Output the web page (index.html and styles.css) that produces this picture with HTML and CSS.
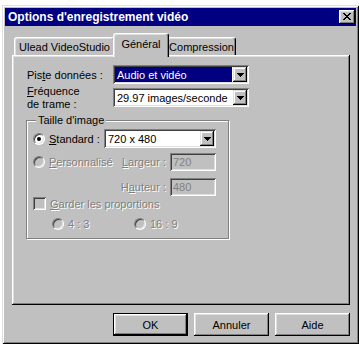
FILE: index.html
```html
<!DOCTYPE html>
<html lang="fr">
<head>
<meta charset="utf-8">
<title>Options d'enregistrement vidéo</title>
<link rel="stylesheet" href="styles.css">
</head>
<body>
<div class="window">
  <div class="titlebar">
    <span class="title">Options d'enregistrement vidéo</span>
    <span class="close"><svg width="8" height="7" viewBox="0 0 8 7" shape-rendering="crispEdges"><path d="M0 0h2v1H0zM6 0h2v1H6zM1 1h2v1H1zM5 1h2v1H5zM2 2h4v1H2zM3 3h2v1H3zM2 4h4v1H2zM1 5h2v1H1zM5 5h2v1H5zM0 6h2v1H0zM6 6h2v1H6z" fill="#000"/></svg></span>
  </div>
  <div class="body">
    <div class="tabs">
      <div class="tab t1">Ulead VideoStudio</div>
      <div class="tab t2 sel">Général</div>
      <div class="tab t3">Compression</div>
    </div>
    <div class="panel">
      <div class="row r1">
        <div class="lbl">Pis<u>t</u>e données :</div>
        <div class="combo w136"><div class="val hl">Audio et vidéo</div><div class="dd"><svg width="7" height="4" viewBox="0 0 7 4" shape-rendering="crispEdges"><path d="M0 0h7v1H0zM1 1h5v1H1zM2 2h3v1H2zM3 3h1v1H3z" fill="#000"/></svg></div></div>
      </div>
      <div class="row r2">
        <div class="lbl two"><u>F</u>réquence<br>de trame :</div>
        <div class="combo w136"><div class="val">29.97 images/seconde</div><div class="dd"><svg width="7" height="4" viewBox="0 0 7 4" shape-rendering="crispEdges"><path d="M0 0h7v1H0zM1 1h5v1H1zM2 2h3v1H2zM3 3h1v1H3z" fill="#000"/></svg></div></div>
      </div>
      <fieldset class="group">
        <legend>Taille d'image</legend>
        <div class="grow ga">
          <span class="radio on"></span><span class="std"><u>S</u>tandard :</span>
          <div class="combo w112"><div class="val">720 x 480</div><div class="dd"><svg width="7" height="4" viewBox="0 0 7 4" shape-rendering="crispEdges"><path d="M0 0h7v1H0zM1 1h5v1H1zM2 2h3v1H2zM3 3h1v1H3z" fill="#000"/></svg></div></div>
        </div>
        <div class="grow gb">
          <span class="radio dis"></span><span class="dim"><u>P</u>ersonnalisé</span>
          <span class="dim fld-lbl"><u>L</u>argeur :</span><span class="field">720</span>
        </div>
        <div class="grow gc">
          <span class="dim fld-lbl">H<u>a</u>uteur :</span><span class="field">480</span>
        </div>
        <div class="grow gd">
          <span class="check"></span><span class="dim"><u>G</u>arder les proportions</span>
        </div>
        <div class="grow ge">
          <span class="ratio"><span class="radio dis"></span><span class="dim">4 : 3</span></span>
          <span class="ratio"><span class="radio dis"></span><span class="dim">16 : 9</span></span>
        </div>
      </fieldset>
    </div>
    <div class="buttons">
      <button class="btn default">OK</button>
      <button class="btn">Annuler</button>
      <button class="btn">Aide</button>
    </div>
  </div>
</div>
</body>
</html>
```
FILE: styles.css
```css
* { box-sizing: border-box; }
body {
  margin: 0;
  background: #fff;
  font-family: "Liberation Sans", Arial, sans-serif;
  font-size: 11px;
  color: #000;
  overflow: hidden;
}
.window {
  margin: 5px 0 0 2px;
  width: 357px;
  height: 339px;
  background: #c0c0c0;
  padding: 3px;
  box-shadow: inset 1px 1px #dfdfdf, inset -1px -1px #000, inset 2px 2px #fff, inset -2px -2px #808080;
  display: flex;
  flex-direction: column;
}
.titlebar {
  height: 18px;
  background: #000080;
  color: #fff;
  display: flex;
  align-items: center;
  padding: 0 1px 0 3px;
}
.title { flex: 1; font-weight: bold; font-size: 12px; }
.close {
  width: 16px;
  height: 14px;
  background: #c0c0c0;
  box-shadow: inset -1px -1px #000, inset 1px 1px #fff, inset -2px -2px #808080, inset 2px 2px #dfdfdf;
  display: flex;
  align-items: center;
  justify-content: center;
  padding: 0 1px 1px 0;
}
.close svg, .dd svg { display: block; }
.body { padding: 7px 6px 0 7px; }
.tabs {
  display: flex;
  align-items: flex-end;
  height: 22px;
  padding-left: 2px;
  position: relative;
  z-index: 1;
}
.tab {
  height: 18px;
  border: 1px solid;
  border-color: #fff #000 transparent #fff;
  border-bottom: 0;
  border-radius: 3px 3px 0 0;
  box-shadow: inset -1px 0 #808080, inset 1px 1px #dfdfdf;
  background: #c0c0c0;
  display: flex;
  align-items: center;
  justify-content: center;
  padding-top: 1px;
  white-space: nowrap;
}
.t1 { width: 101px; }
.t2 { width: 56px; }
.t3 { width: 69px; }
.tab.sel {
  height: 24px;
  margin: 0 -2px -2px;
  padding-bottom: 4px;
  position: relative;
  z-index: 2;
}
.panel {
  height: 250px;
  background: #c0c0c0;
  box-shadow: inset -1px -1px #000, inset 1px 1px #fff, inset -2px -2px #808080, inset 2px 2px #dfdfdf;
  padding: 10px 0 0 15px;
}
.row { display: flex; align-items: center; }
.r1 { height: 19px; }
.r2 { height: 19px; margin-top: 4px; }
.lbl { width: 86px; }
.lbl.two { line-height: 13px; }
.combo {
  display: flex;
  height: 19px;
  background: #fff;
  box-shadow: inset 1px 1px #808080, inset -1px -1px #fff, inset 2px 2px #404040, inset -2px -2px #dfdfdf;
  padding: 2px;
}
.w136 { width: 136px; }
.w112 { width: 112px; margin-left: auto; }
.val {
  flex: 1;
  display: flex;
  align-items: center;
  padding-left: 2px;
  white-space: nowrap;
  overflow: hidden;
}
.val.hl { background: #000080; color: #fff; margin-right: 1px; }
.dd {
  width: 14px;
  background: #c0c0c0;
  box-shadow: inset -1px -1px #000, inset 1px 1px #dfdfdf, inset -2px -2px #808080, inset 2px 2px #fff;
  display: flex;
  align-items: center;
  justify-content: center;
}
.group {
  margin: 7px 0 0 -1px;
  width: 203px;
  height: 125px;
  border: 1px solid #808080;
  box-shadow: 1px 1px 0 #fff, inset 1px 1px 0 #fff;
  padding: 2px 12px 0 6px;
  min-width: 0;
}
.group legend {
  padding: 0 2px;
  margin-left: 3px;
  line-height: 13px;
  background: #c0c0c0;
}
.grow { display: flex; align-items: center; }
.ga { height: 19px; }
.gb { height: 18px; margin-top: 5px; }
.gc { height: 18px; margin-top: 7px; justify-content: flex-end; }
.gd { height: 13px; margin-top: 1px; }
.ge { height: 12px; margin-top: 8px; padding-left: 19px; }
.radio {
  width: 12px;
  height: 12px;
  flex: none;
  border-radius: 50%;
  border: 1px solid;
  border-color: #808080 #fff #fff #808080;
  box-shadow: inset 1px 1px #404040, inset -1px -1px #dfdfdf;
  background: #fff;
  margin-right: 4px;
  display: flex;
  align-items: center;
  justify-content: center;
}
.radio.on::after {
  content: "";
  width: 4px;
  height: 4px;
  border-radius: 50%;
  background: #000;
}
.radio.dis { background: #c0c0c0; }
.std { width: 55px; white-space: nowrap; }
.dim { color: #808080; text-shadow: 1px 1px 0 #fff; white-space: nowrap; }
.fld-lbl { margin-left: auto; margin-right: 4px; }
.gc .fld-lbl { margin-left: 0; }
.field {
  width: 46px;
  height: 18px;
  flex: none;
  box-shadow: inset 1px 1px #808080, inset -1px -1px #fff, inset 2px 2px #404040, inset -2px -2px #dfdfdf;
  background: #c0c0c0;
  color: #808080;
  display: flex;
  align-items: center;
  padding-left: 3px;
}
.check {
  width: 13px;
  height: 13px;
  flex: none;
  box-shadow: inset 1px 1px #808080, inset -1px -1px #fff, inset 2px 2px #404040, inset -2px -2px #dfdfdf;
  background: #c0c0c0;
  margin-right: 4px;
}
.ratio { display: flex; align-items: center; width: 84px; }
.buttons {
  display: flex;
  justify-content: flex-end;
  gap: 6px;
  margin-top: 8px;
}
.btn {
  width: 75px;
  height: 23px;
  font: inherit;
  color: #000;
  background: #c0c0c0;
  border: 0;
  padding: 0;
  box-shadow: inset -1px -1px #000, inset 1px 1px #fff, inset -2px -2px #808080, inset 2px 2px #dfdfdf;
}
.btn.default {
  box-shadow: inset 0 0 0 1px #000, inset -2px -2px #000, inset 2px 2px #fff, inset -3px -3px #808080, inset 3px 3px #dfdfdf;
}
```
